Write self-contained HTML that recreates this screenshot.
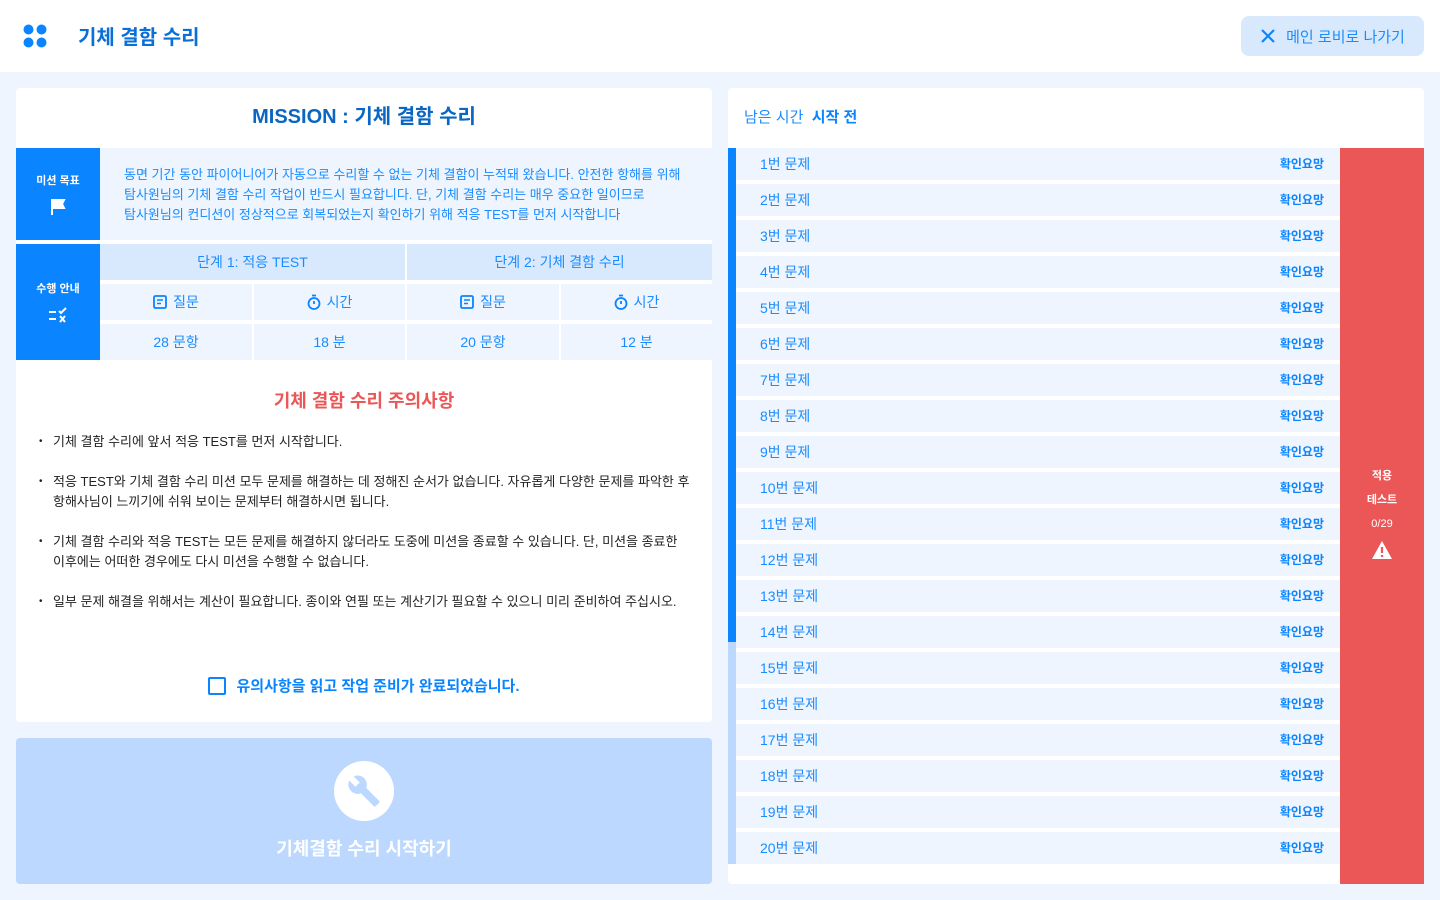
<!DOCTYPE html>
<html><head><meta charset="utf-8"><style>
*{margin:0;padding:0;box-sizing:border-box}
body{width:1440px;height:900px;background:#eef5fe;font-family:"Liberation Sans","Noto Sans CJK KR",sans-serif;position:relative;overflow:hidden}
.a{position:absolute}
.hdr{left:0;top:0;width:1440px;height:72px;background:#fff}
.c{display:flex;align-items:center;justify-content:center}
.row{position:absolute;left:736px;width:604px;height:32px;background:#eef5fe;font-size:14px;color:#1a8cff}
.row span{position:absolute;left:24px;top:6px}
.row b{position:absolute;right:16px;top:7px;font-size:12px;color:#0a84ff}
.cell{position:absolute;height:36px;background:#eef5fe;font-size:14px;color:#1a8cff;display:flex;align-items:center;justify-content:center;gap:6px}
.li{position:absolute;left:53px;font-size:13px;color:#222;line-height:20px;width:650px}
.li:before{content:"•";position:absolute;left:-14px;font-size:10px}
</style></head><body>
<div class="a hdr"></div>
<svg class="a" style="left:23px;top:24px" width="24" height="24"><circle cx="5.5" cy="5.5" r="5" fill="#0a84ff"/><circle cx="18.5" cy="5.5" r="5" fill="#0a84ff"/><circle cx="5.5" cy="18.5" r="5" fill="#0a84ff"/><circle cx="18.5" cy="18.5" r="5" fill="#0a84ff"/></svg>
<div class="a" style="left:78px;top:21px;font-size:20px;font-weight:bold;color:#0a6fd6">기체 결함 수리</div>
<div class="a c" style="left:1241px;top:16px;width:183px;height:40px;background:#d9e9fd;border-radius:8px;font-size:15px;color:#1a8cff;gap:10px">
<svg width="16" height="16"><path d="M2 2L14 14M14 2L2 14" stroke="#0a84ff" stroke-width="2.2"/></svg>메인 로비로 나가기</div>

<div class="a" style="left:16px;top:88px;width:696px;height:634px;background:#fff;border-radius:4px"></div>
<div class="a" style="left:16px;top:100px;width:696px;text-align:center;font-size:20px;font-weight:bold;color:#0a66c2">MISSION : 기체 결함 수리</div>
<div class="a" style="left:16px;top:148px;width:84px;height:92px;background:#0a84ff;color:#fff;font-size:11px;font-weight:bold;text-align:center;padding-top:24px">미션 목표<br><svg style="margin-top:10px" width="16" height="18"><path d="M2 1V17M2 2H14L12 6L14 10H2" fill="#fff" stroke="#fff" stroke-width="2"/></svg></div>
<div class="a" style="left:100px;top:148px;width:612px;height:92px;background:#eef5fe;padding:17px 24px;font-size:13px;line-height:20px;color:#1a8cff">동면 기간 동안 파이어니어가 자동으로 수리할 수 없는 기체 결함이 누적돼 왔습니다. 안전한 항해를 위해<br>탐사원님의 기체 결함 수리 작업이 반드시 필요합니다. 단, 기체 결함 수리는 매우 중요한 일이므로<br>탐사원님의 컨디션이 정상적으로 회복되었는지 확인하기 위해 적응 TEST를 먼저 시작합니다</div>
<div class="a" style="left:16px;top:244px;width:84px;height:116px;background:#0a84ff;color:#fff;font-size:11px;font-weight:bold;text-align:center;padding-top:36px">수행 안내<br><svg style="margin-top:10px" width="22" height="18"><path d="M2 6H9M2 13H9M12 5L14 7L19 2M13 10L18 16M18 10L13 16" stroke="#fff" stroke-width="2" fill="none"/></svg></div>
<div class="cell" style="left:100px;top:244px;width:305px;background:#d9e9fd">단계 1: 적응 TEST</div>
<div class="cell" style="left:407px;top:244px;width:305px;background:#d9e9fd">단계 2: 기체 결함 수리</div>
<div class="cell" style="left:100px;top:284px;width:152px"><svg width="14" height="14"><rect x="1" y="1" width="12" height="12" rx="1.5" fill="none" stroke="#0a84ff" stroke-width="1.8"/><path d="M4 5H10M4 8.5H8" stroke="#0a84ff" stroke-width="1.6"/></svg>질문</div>
<div class="cell" style="left:254px;top:284px;width:151px"><svg width="14" height="16"><circle cx="7" cy="9.5" r="5.5" fill="none" stroke="#0a84ff" stroke-width="1.8"/><path d="M5 1.5H9M7 7V10" stroke="#0a84ff" stroke-width="1.8"/></svg>시간</div>
<div class="cell" style="left:407px;top:284px;width:152px"><svg width="14" height="14"><rect x="1" y="1" width="12" height="12" rx="1.5" fill="none" stroke="#0a84ff" stroke-width="1.8"/><path d="M4 5H10M4 8.5H8" stroke="#0a84ff" stroke-width="1.6"/></svg>질문</div>
<div class="cell" style="left:561px;top:284px;width:151px"><svg width="14" height="16"><circle cx="7" cy="9.5" r="5.5" fill="none" stroke="#0a84ff" stroke-width="1.8"/><path d="M5 1.5H9M7 7V10" stroke="#0a84ff" stroke-width="1.8"/></svg>시간</div>
<div class="cell" style="left:100px;top:324px;width:152px">28 문항</div>
<div class="cell" style="left:254px;top:324px;width:151px">18 분</div>
<div class="cell" style="left:407px;top:324px;width:152px">20 문항</div>
<div class="cell" style="left:561px;top:324px;width:151px">12 분</div>

<div class="a" style="left:16px;top:387px;width:696px;text-align:center;font-size:18px;font-weight:bold;color:#eb5757">기체 결함 수리 주의사항</div>
<div class="li" style="top:432px">기체 결함 수리에 앞서 적응 TEST를 먼저 시작합니다.</div>
<div class="li" style="top:472px">적응 TEST와 기체 결함 수리 미션 모두 문제를 해결하는 데 정해진 순서가 없습니다. 자유롭게 다양한 문제를 파악한 후<br>항해사님이 느끼기에 쉬워 보이는 문제부터 해결하시면 됩니다.</div>
<div class="li" style="top:532px">기체 결함 수리와 적응 TEST는 모든 문제를 해결하지 않더라도 도중에 미션을 종료할 수 있습니다. 단, 미션을 종료한<br>이후에는 어떠한 경우에도 다시 미션을 수행할 수 없습니다.</div>
<div class="li" style="top:592px">일부 문제 해결을 위해서는 계산이 필요합니다. 종이와 연필 또는 계산기가 필요할 수 있으니 미리 준비하여 주십시오.</div>
<div class="a c" style="left:16px;top:675px;width:696px;gap:10px;font-size:15px;font-weight:bold;color:#0a84ff"><span style="width:18px;height:18px;border:2px solid #0a84ff;border-radius:2px;display:inline-block"></span>유의사항을 읽고 작업 준비가 완료되었습니다.</div>

<div class="a" style="left:16px;top:738px;width:696px;height:146px;background:#bcd8fe;border-radius:4px"></div>
<div class="a c" style="left:334px;top:761px;width:60px;height:60px;border-radius:50%;background:#fff"><svg width="34" height="34" viewBox="0 0 24 24"><path d="M22.7 19l-9.1-9.1c.9-2.3.4-5-1.5-6.9-2-2-5-2.4-7.4-1.3L9 6 6 9 1.6 4.7C.4 7.1.9 10.1 2.9 12.1c1.9 1.9 4.6 2.4 6.9 1.5l9.1 9.1c.4.4 1 .4 1.4 0l2.3-2.3c.5-.4.5-1.1.1-1.4z" fill="#bcd8fe"/></svg></div>
<div class="a" style="left:16px;top:835px;width:696px;text-align:center;font-size:18px;font-weight:bold;color:#fff">기체결함 수리 시작하기</div>

<div class="a" style="left:728px;top:88px;width:696px;height:796px;background:#fff;border-radius:4px"></div>
<div class="a" style="left:744px;top:106px;font-size:15px;color:#1a8cff">남은 시간 &nbsp;<b style="color:#0a84ff">시작 전</b></div>
<div class="a" style="left:728px;top:148px;width:8px;height:494px;background:#0a84ff"></div>
<div class="a" style="left:728px;top:642px;width:8px;height:222px;background:#bcd8fe"></div>
<div class="a" style="left:1340px;top:148px;width:84px;height:736px;background:#eb5757"></div>
<div class="a" style="left:1340px;top:464px;width:84px;text-align:center;color:#fff;font-size:11px;line-height:24px"><b>적용</b><br><b>테스트</b><br>0/29<br><svg style="margin-top:4px" width="22" height="20"><path d="M11 1L21 19H1Z" fill="#fff"/><path d="M11 7V13M11 15V17" stroke="#eb5757" stroke-width="2.2"/></svg></div>
<div class="row" style="top:148px"><span>1번 문제</span><b>확인요망</b></div>
<div class="row" style="top:184px"><span>2번 문제</span><b>확인요망</b></div>
<div class="row" style="top:220px"><span>3번 문제</span><b>확인요망</b></div>
<div class="row" style="top:256px"><span>4번 문제</span><b>확인요망</b></div>
<div class="row" style="top:292px"><span>5번 문제</span><b>확인요망</b></div>
<div class="row" style="top:328px"><span>6번 문제</span><b>확인요망</b></div>
<div class="row" style="top:364px"><span>7번 문제</span><b>확인요망</b></div>
<div class="row" style="top:400px"><span>8번 문제</span><b>확인요망</b></div>
<div class="row" style="top:436px"><span>9번 문제</span><b>확인요망</b></div>
<div class="row" style="top:472px"><span>10번 문제</span><b>확인요망</b></div>
<div class="row" style="top:508px"><span>11번 문제</span><b>확인요망</b></div>
<div class="row" style="top:544px"><span>12번 문제</span><b>확인요망</b></div>
<div class="row" style="top:580px"><span>13번 문제</span><b>확인요망</b></div>
<div class="row" style="top:616px"><span>14번 문제</span><b>확인요망</b></div>
<div class="row" style="top:652px"><span>15번 문제</span><b>확인요망</b></div>
<div class="row" style="top:688px"><span>16번 문제</span><b>확인요망</b></div>
<div class="row" style="top:724px"><span>17번 문제</span><b>확인요망</b></div>
<div class="row" style="top:760px"><span>18번 문제</span><b>확인요망</b></div>
<div class="row" style="top:796px"><span>19번 문제</span><b>확인요망</b></div>
<div class="row" style="top:832px"><span>20번 문제</span><b>확인요망</b></div>
</body></html>
